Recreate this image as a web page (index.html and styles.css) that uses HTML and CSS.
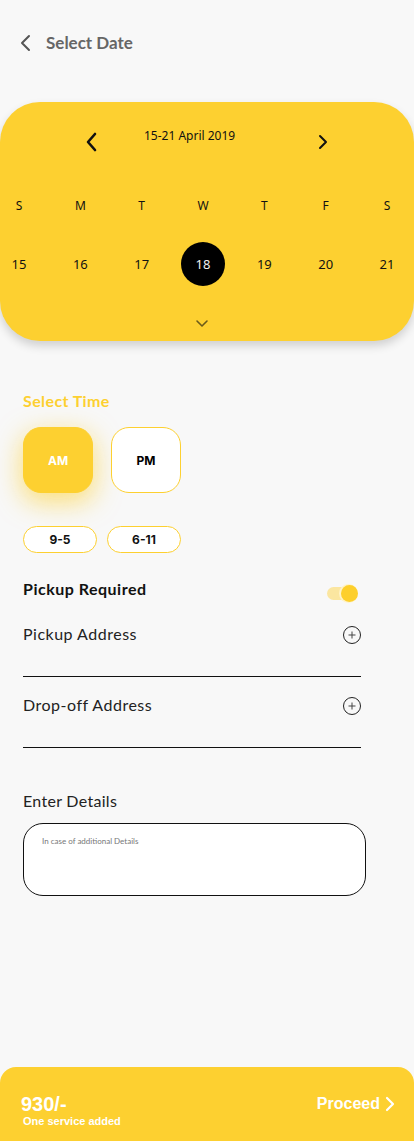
FILE: index.html
```html
<!DOCTYPE html>
<html>
<head>
<meta charset="utf-8">
<link rel="stylesheet" href="styles.css">
</head>
<body>
<div class="page">
  <header class="topbar">
    <svg class="back" width="12" height="18" viewBox="0 0 12 18"><path d="M10 2 L3 9 L10 16" fill="none" stroke="#555" stroke-width="2" stroke-linecap="round" stroke-linejoin="round"/></svg>
    <span class="title">Select Date</span>
  </header>

  <section class="calendar">
    <div class="nav">
      <svg class="nav-left" width="14" height="20" viewBox="0 0 14 20"><path d="M10 2 L3 10 L10 18" fill="none" stroke="#111" stroke-width="2.6" stroke-linecap="round" stroke-linejoin="round"/></svg>
      <span class="range">15-21 April 2019</span>
      <svg class="nav-right" width="10" height="16" viewBox="0 0 10 16"><path d="M2 2 L8 8 L2 14" fill="none" stroke="#111" stroke-width="2" stroke-linecap="round" stroke-linejoin="round"/></svg>
    </div>
    <div class="week letters">
      <span>S</span><span>M</span><span>T</span><span>W</span><span>T</span><span>F</span><span>S</span>
    </div>
    <div class="week numbers">
      <span>15</span><span>16</span><span>17</span><span class="sel">18</span><span>19</span><span>20</span><span>21</span>
    </div>
    <div class="expand">
      <svg width="14" height="9" viewBox="0 0 14 9"><path d="M2 2 L7 7 L12 2" fill="none" stroke="#6b5a1a" stroke-width="1.6" stroke-linecap="round" stroke-linejoin="round"/></svg>
    </div>
  </section>

  <main class="content">
    <h2 class="section-title">Select Time</h2>
    <div class="periods">
      <div class="period active">AM</div>
      <div class="period">PM</div>
    </div>
    <div class="chips">
      <div class="chip">9-5</div>
      <div class="chip">6-11</div>
    </div>

    <div class="pickup-row">
      <span class="pickup-label">Pickup Required</span>
      <div class="toggle"><span class="knob"></span></div>
    </div>

    <div class="field first">
      <span>Pickup Address</span>
      <span class="plus"></span>
    </div>
    <div class="field second">
      <span>Drop-off Address</span>
      <span class="plus"></span>
    </div>

    <div class="details-label">Enter Details</div>
    <div class="details-box">In case of additional Details</div>
  </main>

  <footer class="footer">
    <div class="price">
      <div class="amount">930/-</div>
      <div class="sub">One service added</div>
    </div>
    <div class="proceed">
      <span>Proceed</span>
      <svg width="10" height="16" viewBox="0 0 10 16"><path d="M2 2 L8 8 L2 14" fill="none" stroke="#fff" stroke-width="2.2" stroke-linecap="round" stroke-linejoin="round"/></svg>
    </div>
  </footer>
</div>
</body>
</html>
```
FILE: styles.css
```css
* { box-sizing: border-box; }
html, body { margin: 0; padding: 0; }
body {
  background: #f8f8f8;
  font-family: Lato, "Open Sans", sans-serif;
  color: #111;
}
.page {
  width: 414px;
  min-height: 1141px;
  display: flex;
  flex-direction: column;
}
.topbar {
  height: 84px;
  display: flex;
  align-items: center;
  padding-left: 19px;
}
.back { margin-top: 2px; }
.title {
  margin-left: 15px;
  font-size: 17px;
  font-weight: 700;
  color: #666;
}
.calendar {
  margin-top: 18px;
  background: #fdd030;
  border-radius: 40px;
  box-shadow: 0 5px 10px rgba(0,0,0,0.16);
  padding: 22px 0 12px;
  font-family: "Noto Sans", "Open Sans", sans-serif;
}
.nav {
  height: 36px;
  display: flex;
  align-items: center;
  padding: 0 86px 0 85px;
}
.range {
  margin-left: 45px;
  font-size: 12px;
  color: #111;
  padding-bottom: 14px;
}
.nav-right { margin-left: auto; }
.week {
  display: flex;
  justify-content: space-between;
  padding: 0 15px 0 7px;
}
.week span {
  width: 24px;
  text-align: center;
  color: #111;
}
.letters {
  margin-top: 35px;
  height: 20px;
  align-items: center;
  font-size: 12px;
}
.numbers {
  margin-top: 27px;
  height: 44px;
  align-items: center;
  font-size: 13px;
}
.numbers span { display: flex; align-items: center; justify-content: center; height: 44px; }
.numbers span.sel {
  width: 44px;
  margin: 0 -10px;
  border-radius: 50%;
  background: #000;
  color: #f0f0f0;
}
.expand {
  margin-top: 31px;
  height: 12px;
  display: flex;
  justify-content: center;
  align-items: center;
  padding-right: 10px;
}
.content {
  padding: 0 23px;
  display: flex;
  flex-direction: column;
}
.section-title {
  margin: 50px 0 0;
  font-size: 16px;
  line-height: 20px;
  font-weight: 700;
  letter-spacing: 0.4px;
  color: #fdd030;
}
.periods {
  margin-top: 16px;
  display: flex;
  gap: 18px;
}
.period {
  width: 70px;
  height: 66px;
  border-radius: 18px;
  background: #fff;
  border: 1px solid #fdd030;
  display: flex;
  align-items: center;
  justify-content: center;
  font-family: Inter, sans-serif;
  font-size: 12px;
  font-weight: 700;
  color: #000;
}
.period.active {
  background: #fdd030;
  color: #fff;
  box-shadow: 0 8px 26px 2px rgba(253, 208, 48, 0.6);
}
.chips {
  margin-top: 33px;
  display: flex;
  gap: 10px;
}
.chip {
  width: 74px;
  height: 27px;
  border-radius: 14px;
  background: #fff;
  border: 1px solid #fdd030;
  display: flex;
  align-items: center;
  justify-content: center;
  font-family: Inter, sans-serif;
  font-size: 12px;
  font-weight: 700;
}
.pickup-row {
  margin-top: 26px;
  width: 335px;
  height: 20px;
  display: flex;
  align-items: flex-start;
  justify-content: space-between;
}
.pickup-label {
  font-size: 16px;
  line-height: 20px;
  font-weight: 700;
  letter-spacing: 0.5px;
  color: #111;
}
.toggle {
  position: relative;
  width: 31px;
  height: 17px;
  margin-top: 6px;
}
.toggle::before {
  content: "";
  position: absolute;
  left: 0;
  top: 2px;
  width: 24px;
  height: 13px;
  border-radius: 7px;
  background: #fbe6a0;
}
.knob {
  position: absolute;
  right: 0;
  top: 0;
  width: 17px;
  height: 17px;
  border-radius: 50%;
  background: #fdcf2c;
  box-shadow: -1px 0 0 1px #fff3c8;
}
.field {
  display: flex;
  justify-content: space-between;
  align-items: flex-start;
  width: 338px;
  font-size: 16px;
  line-height: 20px;
  letter-spacing: 0.5px;
  color: #222;
  padding-bottom: 32px;
  border-bottom: 1px solid #111;
}
.field.first { margin-top: 25px; }
.field.second { margin-top: 18px; }
.plus {
  position: relative;
  width: 18px;
  height: 18px;
  margin-top: 2px;
  border: 1.2px solid #222;
  border-radius: 50%;
}
.plus::before, .plus::after {
  content: "";
  position: absolute;
  left: 50%;
  top: 50%;
  background: #444;
}
.plus::before { width: 7px; height: 1px; transform: translate(-50%, -50%); }
.plus::after { width: 1px; height: 7px; transform: translate(-50%, -50%); }
.details-label {
  margin-top: 43px;
  font-size: 16px;
  line-height: 20px;
  letter-spacing: 0.3px;
  color: #222;
}
.details-box {
  margin-top: 12px;
  width: 343px;
  height: 73px;
  border: 1px solid #111;
  border-radius: 20px;
  background: #fff;
  padding: 12px 18px;
  font-size: 8px;
  color: #777;
}
.footer {
  margin-top: auto;
  height: 74px;
  background: #fdd030;
  border-radius: 16px 16px 0 0;
  display: flex;
  justify-content: space-between;
  align-items: flex-start;
  padding: 26px 19px 0 21px;
  font-family: "Liberation Sans", Arial, sans-serif;
  color: #fff;
  font-weight: 700;
}
.amount { font-size: 20px; line-height: 22px; }
.sub { font-size: 11px; line-height: 13px; margin-left: 2px; }
.proceed {
  display: flex;
  align-items: center;
  gap: 5px;
  font-size: 16px;
  line-height: 22px;
}
```
